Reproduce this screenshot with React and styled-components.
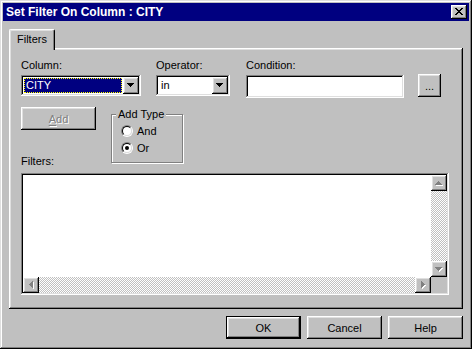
import React from 'react';
import styled, { createGlobalStyle, css } from 'styled-components';

const GlobalStyle = createGlobalStyle`
  html, body { margin: 0; padding: 0; background: #c0c0c0; }
  body { font-family: "Liberation Sans", Arial, sans-serif; font-size: 11px; color: #000; }
  * { box-sizing: border-box; }
`;

const raised = css`
  box-shadow: inset -1px -1px #000, inset 1px 1px #fff, inset -2px -2px #808080, inset 2px 2px #dfdfdf;
`;
const sunken = css`
  box-shadow: inset -1px -1px #fff, inset 1px 1px #808080, inset -2px -2px #dfdfdf, inset 2px 2px #000;
`;
const dither = css`
  background-color: #fff;
  background-image: conic-gradient(#c0c0c0 25%, #fff 0 50%, #c0c0c0 0 75%, #fff 0);
  background-size: 2px 2px;
`;
const uiFont = css`
  font-family: "Liberation Sans", Arial, sans-serif;
  font-size: 11px;
`;

const Window = styled.div`
  width: 472px;
  height: 349px;
  padding: 3px;
  background: #c0c0c0;
  display: flex;
  flex-direction: column;
  box-shadow: inset -1px -1px #000, inset 1px 1px #dfdfdf, inset -2px -2px #808080, inset 2px 2px #fff;
`;

const TitleBar = styled.div`
  height: 18px;
  background: #000080;
  color: #fff;
  display: flex;
  align-items: center;
  justify-content: space-between;
  padding: 0 2px 0 3px;
`;

const Title = styled.span`
  font-weight: bold;
  font-size: 12px;
  line-height: 14px;
  white-space: nowrap;
`;

const CloseButton = styled.button`
  width: 16px;
  height: 14px;
  border: 0;
  padding: 0 1px 1px 0;
  background: #c0c0c0;
  display: flex;
  align-items: center;
  justify-content: center;
  ${raised}
`;

const Body = styled.div`
  flex: 1;
  display: flex;
  flex-direction: column;
  padding: 8px 6px 0 6px;
`;

const TabStrip = styled.div`
  height: 19px;
  display: flex;
  align-items: flex-start;
`;

const Tab = styled.div`
  position: relative;
  z-index: 1;
  width: 46px;
  height: 21px;
  background: #c0c0c0;
  border-top: 1px solid #fff;
  border-left: 1px solid #fff;
  border-right: 1px solid #000;
  border-radius: 2px 2px 0 0;
  box-shadow: inset -1px 0 #808080, inset 1px 1px #dfdfdf;
  display: flex;
  align-items: center;
  justify-content: center;
  padding-bottom: 2px;
  line-height: 13px;
`;

const Panel = styled.div`
  height: 261px;
  background: #c0c0c0;
  padding: 11px 12px 14px 12px;
  display: flex;
  flex-direction: column;
  ${raised}
`;

const FieldRow = styled.div`
  display: flex;
  align-items: flex-start;
`;

const Field = styled.div`
  display: flex;
  flex-direction: column;
  width: ${p => p.$w}px;
  margin-left: ${p => p.$ml || 0}px;
`;

const Label = styled.div`
  height: 13px;
  line-height: 13px;
  margin-bottom: 3px;
  white-space: nowrap;
`;

const Combo = styled.div`
  height: 21px;
  padding: 2px;
  background: #fff;
  display: flex;
  ${sunken}
`;

const ComboValue = styled.div`
  flex: 1;
  margin: 1px;
  padding-left: 1px;
  line-height: 13px;
  border: 1px solid transparent;
  ${p => p.$focused && css`
    background: #000080;
    color: #fff;
    border: 1px dotted #ffff00;
  `}
`;

const ComboButton = styled.div`
  width: 16px;
  height: 17px;
  background: #c0c0c0;
  display: flex;
  align-items: center;
  justify-content: center;
  ${raised}
`;

const TextInput = styled.input`
  width: 100%;
  height: 23px;
  border: 0;
  outline: none;
  background: #fff;
  padding: 0 4px;
  ${uiFont}
  ${sunken}
`;

const PushButton = styled.button`
  width: ${p => p.$w || 75}px;
  height: 23px;
  margin-left: ${p => p.$ml || 0}px;
  margin-top: ${p => p.$mt || 0}px;
  border: 0;
  padding: 0;
  background: #c0c0c0;
  color: #000;
  ${uiFont}
  ${raised}
  ${p => p.$default && css`
    box-shadow: inset 0 0 0 1px #000, inset -2px -2px #000, inset 2px 2px #fff, inset -3px -3px #808080, inset 3px 3px #dfdfdf;
  `}
  &:disabled {
    color: #808080;
    text-shadow: 1px 1px #fff;
  }
  u { text-decoration-thickness: 1px; text-underline-offset: 2px; }
`;

const ActionRow = styled.div`
  display: flex;
  align-items: flex-start;
  margin-top: 9px;
`;

const LeftCol = styled.div`
  display: flex;
  flex-direction: column;
  width: 75px;
`;

const FiltersLabel = styled.div`
  margin-top: 25px;
  height: 13px;
  line-height: 13px;
`;

const GroupBox = styled.div`
  width: 72px;
  margin: 7px 0 0 15px;
  padding: 0 0 6px 9px;
  border: 1px solid #808080;
  box-shadow: inset 1px 1px #fff, 1px 1px #fff;
`;

const GroupCaption = styled.div`
  width: fit-content;
  margin: -7px 0 0 -5px;
  padding: 0 2px;
  height: 13px;
  line-height: 13px;
  background: #c0c0c0;
  white-space: nowrap;
`;

const RadioList = styled.div`
  margin-top: 1px;
  display: flex;
  flex-direction: column;
`;

const RadioRow = styled.label`
  height: 17px;
  display: flex;
  align-items: center;
  gap: 4px;
`;

const RadioOuter = styled.span`
  width: 12px;
  height: 12px;
  border-radius: 50%;
  border: 1px solid;
  border-color: #808080 #fff #fff #808080;
  display: flex;
`;

const RadioInner = styled.span`
  flex: 1;
  border-radius: 50%;
  border: 1px solid;
  border-color: #000 #dfdfdf #dfdfdf #000;
  background: #fff;
  display: flex;
  align-items: center;
  justify-content: center;
`;

const RadioDot = styled.span`
  width: 4px;
  height: 4px;
  border-radius: 50%;
  background: #000;
`;

const ListBox = styled.div`
  margin-top: 5px;
  width: 428px;
  height: 122px;
  padding: 2px;
  background: #fff;
  display: grid;
  grid-template-columns: 1fr 16px;
  grid-template-rows: 1fr 16px;
  ${sunken}
`;

const ListContent = styled.div`
  background: #fff;
`;

const ScrollBar = styled.div`
  display: flex;
  flex-direction: ${p => (p.$vertical ? 'column' : 'row')};
  ${dither}
`;

const ScrollTrack = styled.div`
  flex: 1;
`;

const ScrollButton = styled.div`
  width: 16px;
  height: 16px;
  flex: none;
  background: #c0c0c0;
  display: flex;
  align-items: center;
  justify-content: center;
  ${raised}
`;

const Corner = styled.div`
  background: #c0c0c0;
`;

const ButtonRow = styled.div`
  display: flex;
  justify-content: flex-end;
  gap: 6px;
  margin-top: 7px;
`;

const ARROWS = {
  down: 'M0 0h7v1H0zM1 1h5v1H1zM2 2h3v1H2zM3 3h1v1H3z',
  up: 'M3 0h1v1H3zM2 1h3v1H2zM1 2h5v1H1zM0 3h7v1H0z',
  left: 'M3 0h1v7H3zM2 1h1v5H2zM1 2h1v3H1zM0 3h1v1H0z',
  right: 'M0 0h1v7H0zM1 1h1v5H1zM2 2h1v3H2zM3 3h1v1H3z',
};

function Arrow({ dir = 'down', disabled }) {
  const vertical = dir === 'up' || dir === 'down';
  const w = vertical ? 7 : 4;
  const h = vertical ? 4 : 7;
  const d = ARROWS[dir];
  return (
    <svg width={w + 1} height={h + 1} viewBox={`0 0 ${w + 1} ${h + 1}`} shapeRendering="crispEdges">
      {disabled && <path d={d} fill="#fff" transform="translate(1 1)" />}
      <path d={d} fill={disabled ? '#808080' : '#000'} />
    </svg>
  );
}

function CloseGlyph() {
  return (
    <svg width="8" height="7" viewBox="0 0 8 7" shapeRendering="crispEdges">
      <path
        fill="#000"
        d="M0 0h2v1H0zM6 0h2v1H6zM1 1h2v1H1zM5 1h2v1H5zM2 2h4v1H2zM3 3h2v1H3zM2 4h4v1H2zM1 5h2v1H1zM5 5h2v1H5zM0 6h2v1H0zM6 6h2v1H6z"
      />
    </svg>
  );
}

function Radio({ checked, children }) {
  return (
    <RadioRow>
      <RadioOuter>
        <RadioInner>{checked && <RadioDot />}</RadioInner>
      </RadioOuter>
      {children}
    </RadioRow>
  );
}

export default function App() {
  return (
    <>
      <GlobalStyle />
      <Window>
        <TitleBar>
          <Title>Set Filter On Column : CITY</Title>
          <CloseButton aria-label="Close">
            <CloseGlyph />
          </CloseButton>
        </TitleBar>
        <Body>
          <TabStrip>
            <Tab>Filters</Tab>
          </TabStrip>
          <Panel>
            <FieldRow>
              <Field $w={120}>
                <Label>Column:</Label>
                <Combo>
                  <ComboValue $focused>CITY</ComboValue>
                  <ComboButton>
                    <Arrow dir="down" />
                  </ComboButton>
                </Combo>
              </Field>
              <Field $w={74} $ml={15}>
                <Label>Operator:</Label>
                <Combo>
                  <ComboValue>in</ComboValue>
                  <ComboButton>
                    <Arrow dir="down" />
                  </ComboButton>
                </Combo>
              </Field>
              <Field $w={158} $ml={16}>
                <Label>Condition:</Label>
                <TextInput defaultValue="" />
              </Field>
              <PushButton $w={23} $ml={14} $mt={15}>...</PushButton>
            </FieldRow>
            <ActionRow>
              <LeftCol>
                <PushButton disabled>
                  <u>A</u>dd
                </PushButton>
                <FiltersLabel>Filters:</FiltersLabel>
              </LeftCol>
              <GroupBox>
                <GroupCaption>Add Type</GroupCaption>
                <RadioList>
                  <Radio>And</Radio>
                  <Radio checked>Or</Radio>
                </RadioList>
              </GroupBox>
            </ActionRow>
            <ListBox>
              <ListContent />
              <ScrollBar $vertical>
                <ScrollButton>
                  <Arrow dir="up" disabled />
                </ScrollButton>
                <ScrollTrack />
                <ScrollButton>
                  <Arrow dir="down" disabled />
                </ScrollButton>
              </ScrollBar>
              <ScrollBar>
                <ScrollButton>
                  <Arrow dir="left" disabled />
                </ScrollButton>
                <ScrollTrack />
                <ScrollButton>
                  <Arrow dir="right" disabled />
                </ScrollButton>
              </ScrollBar>
              <Corner />
            </ListBox>
          </Panel>
          <ButtonRow>
            <PushButton $default>OK</PushButton>
            <PushButton>Cancel</PushButton>
            <PushButton>Help</PushButton>
          </ButtonRow>
        </Body>
      </Window>
    </>
  );
}
